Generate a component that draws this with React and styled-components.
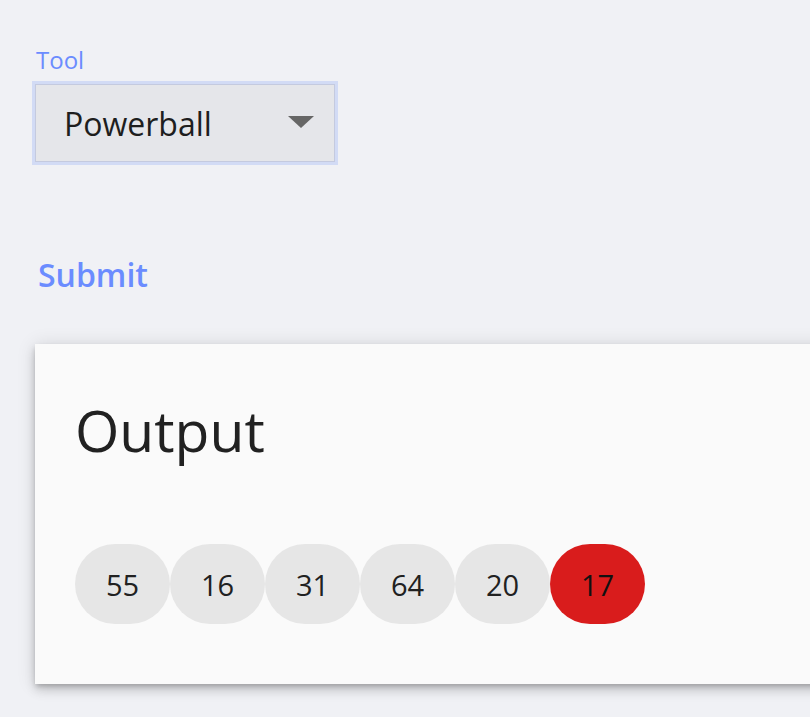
import React from "react";
import styled, { createGlobalStyle } from "styled-components";

const Global = createGlobalStyle`
  html, body { margin: 0; padding: 0; background: #f0f1f5; }
  body { font-family: "Open Sans", "Noto Sans", sans-serif; color: #212121; }
`;

const Page = styled.div`
  display: flex;
  flex-direction: column;
  align-items: flex-start;
  padding: 45px 0 0 32px;
  min-height: 717px;
  box-sizing: border-box;
  overflow: hidden;
`;

const Field = styled.div`
  display: flex;
  flex-direction: column;
  align-items: flex-start;
  gap: 6px;
`;

const Label = styled.label`
  font-size: 24px;
  color: #6b8cff;
  margin-left: 4px;
  line-height: 30px;
`;

const Select = styled.div`
  box-sizing: border-box;
  width: 306px;
  height: 84px;
  border: 3px solid #d2dbf5;
  display: flex;
`;

const SelectInner = styled.div`
  flex: 1;
  display: flex;
  align-items: center;
  justify-content: space-between;
  border: 1px solid #c4cadf;
  background: #e5e6ea;
  padding: 0 20px 0 28px;
  font-size: 32px;
  color: #1e1e1e;
`;

const Caret = styled.span`
  width: 0;
  height: 0;
  border-left: 13px solid transparent;
  border-right: 13px solid transparent;
  border-top: 12px solid #666;
  margin-top: -2px;
`;

const SubmitButton = styled.button`
  margin: 90px 0 0 6px;
  padding: 0;
  border: none;
  background: none;
  font-family: inherit;
  font-weight: 600;
  font-size: 32px;
  color: #6b8cff;
  line-height: 40px;
  cursor: pointer;
`;

const Card = styled.section`
  margin: 49px 0 0 3px;
  width: 820px;
  box-sizing: border-box;
  height: 340px;
  background: #fafafa;
  padding: 44px 40px;
  box-shadow: 0 3px 5px -1px rgba(0,0,0,0.2), 0 6px 10px 0 rgba(0,0,0,0.14), 0 1px 18px 0 rgba(0,0,0,0.12);
`;

const Heading = styled.h2`
  margin: 0;
  font-weight: 400;
  font-size: 57px;
  line-height: 84px;
  color: #212121;
`;

const Balls = styled.div`
  display: flex;
  margin-top: 72px;
`;

const Ball = styled.div`
  width: 95px;
  height: 80px;
  border-radius: 40px;
  display: flex;
  align-items: center;
  justify-content: center;
  font-size: 29px;
  background: ${(p) => (p.$power ? "#d91c1c" : "#e6e6e6")};
  color: ${(p) => (p.$power ? "#111" : "#212121")};
`;

const numbers = [55, 16, 31, 64, 20];

export default function App() {
  return (
    <>
      <Global />
      <Page>
        <Field>
          <Label>Tool</Label>
          <Select>
            <SelectInner>
              <span>Powerball</span>
              <Caret />
            </SelectInner>
          </Select>
        </Field>
        <SubmitButton>Submit</SubmitButton>
        <Card>
          <Heading>Output</Heading>
          <Balls>
            {numbers.map((n) => (
              <Ball key={n}>{n}</Ball>
            ))}
            <Ball $power>17</Ball>
          </Balls>
        </Card>
      </Page>
    </>
  );
}
